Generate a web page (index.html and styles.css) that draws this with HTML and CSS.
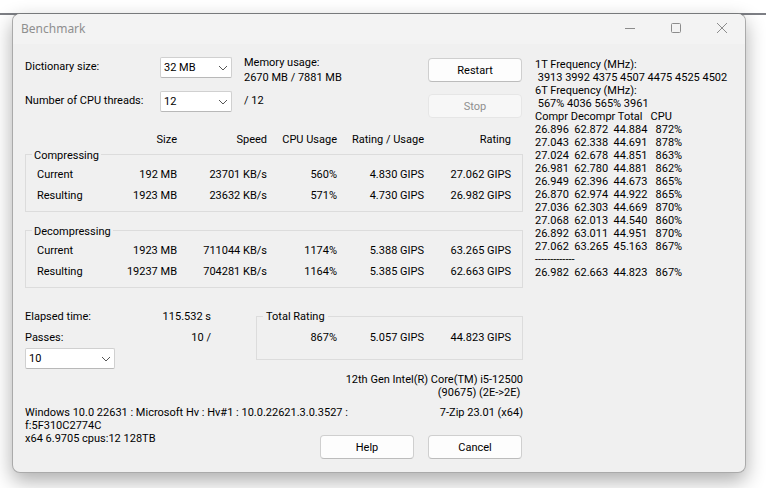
FILE: index.html
```html
<!DOCTYPE html>
<html lang="en">
<head>
<meta charset="utf-8">
<title>Benchmark</title>
<link rel="stylesheet" href="styles.css">
</head>
<body>
<main class="window">
  <header class="titlebar">
    <h1 class="title">Benchmark</h1>
    <div class="window-controls">
      <button type="button" aria-label="Minimize"><svg width="12" height="12" viewBox="0 0 12 12"><path d="M1 5.5h10"/></svg></button>
      <button type="button" aria-label="Maximize"><svg width="12" height="12" viewBox="0 0 12 12"><rect x="1.5" y="0.5" width="9" height="9" rx="1"/></svg></button>
      <button type="button" aria-label="Close"><svg width="12" height="12" viewBox="0 0 12 12"><path d="M1 0l10 10M11 0L1 10"/></svg></button>
    </div>
  </header>
  <div class="content">
    <section class="main">
      <div class="top">
        <div class="settings">
          <label for="dictionary">Dictionary size:</label>
          <span class="select"><select id="dictionary"><option>32 MB</option></select><svg width="10" height="6" viewBox="0 0 10 6"><path d="M1 1l4 4 4-4"/></svg></span>
          <div class="memory">Memory usage:<br>2670 MB / 7881 MB</div>
          <label for="threads">Number of CPU threads:</label>
          <span class="select"><select id="threads"><option>12</option></select><svg width="10" height="6" viewBox="0 0 10 6"><path d="M1 1l4 4 4-4"/></svg></span>
          <div>/ 12</div>
        </div>
        <div class="run">
          <button type="button" class="button">Restart</button>
          <button type="button" class="button" disabled>Stop</button>
        </div>
      </div>
      <table class="ratings">
        <colgroup><col class="c-name"><col class="c-size"><col class="c-speed"><col class="c-usage"><col class="c-ratio"><col class="c-rating"></colgroup>
        <thead>
          <tr><td></td><th scope="col">Size</th><th scope="col">Speed</th><th scope="col">CPU Usage</th><th scope="col">Rating / Usage</th><th scope="col">Rating</th></tr>
        </thead>
        <tbody>
          <tr class="group"><th colspan="6" scope="rowgroup"><span>Compressing</span></th></tr>
          <tr><th scope="row">Current</th><td>192 MB</td><td>23701 KB/s</td><td>560%</td><td>4.830 GIPS</td><td>27.062 GIPS</td></tr>
          <tr><th scope="row">Resulting</th><td>1923 MB</td><td>23632 KB/s</td><td>571%</td><td>4.730 GIPS</td><td>26.982 GIPS</td></tr>
        </tbody>
        <tbody>
          <tr class="group"><th colspan="6" scope="rowgroup"><span>Decompressing</span></th></tr>
          <tr><th scope="row">Current</th><td>1923 MB</td><td>711044 KB/s</td><td>1174%</td><td>5.388 GIPS</td><td>63.265 GIPS</td></tr>
          <tr><th scope="row">Resulting</th><td>19237 MB</td><td>704281 KB/s</td><td>1164%</td><td>5.385 GIPS</td><td>62.663 GIPS</td></tr>
        </tbody>
      </table>
      <div class="summary">
        <div class="progress">
          <div class="pair"><span>Elapsed time:</span><span>115.532 s</span></div>
          <div class="pair"><label for="passes">Passes:</label><span>10 /</span></div>
          <span class="select passes"><select id="passes"><option>10</option></select><svg width="10" height="6" viewBox="0 0 10 6"><path d="M1 1l4 4 4-4"/></svg></span>
        </div>
        <fieldset class="total">
          <legend>Total Rating</legend>
          <div class="total-row"><span>867%</span><span>5.057 GIPS</span><span>44.823 GIPS</span></div>
        </fieldset>
      </div>
      <div class="cpu">12th Gen Intel(R) Core(TM) i5-12500
(90675) (2E-&gt;2E) </div>
      <footer class="footer">
        <div class="system">Windows 10.0 22631 : Microsoft Hv : Hv#1 : 10.0.22621.3.0.3527 :
f:5F310C2774C
x64 6.9705 cpus:12 128TB</div>
        <div class="version">7-Zip 23.01 (x64)</div>
        <div class="actions">
          <button type="button" class="button">Help</button>
          <button type="button" class="button">Cancel</button>
        </div>
      </footer>
    </section>
    <aside class="log">1T Frequency (MHz):
 3913 3992 4375 4507 4475 4525 4502
6T Frequency (MHz):
 567% 4036 565% 3961
Compr Decompr Total   CPU
26.896  62.872  44.884   872%
27.043  62.338  44.691   878%
27.024  62.678  44.851   863%
26.981  62.780  44.881   862%
26.949  62.396  44.673   865%
26.870  62.974  44.922   865%
27.036  62.303  44.669   870%
27.068  62.013  44.540   860%
26.892  63.011  44.951   870%
27.062  63.265  45.163   867%
-------------
26.982  62.663  44.823   867%</aside>
  </div>
</main>
</body>
</html>
```
FILE: styles.css
```css
* { box-sizing: border-box; }

body {
  margin: 0;
  padding: 13px 20px 15px 12px;
  background: linear-gradient(#7d7f85, #7d7f85) 0 13px / 100% 2px no-repeat #fff;
  color: #000;
  font: 11px/13px Roboto, "Liberation Sans", sans-serif;
  overflow: hidden;
}

button, select { font: inherit; color: inherit; }

.window {
  border: 1px solid #aaa;
  border-top-color: #77797b;
  border-radius: 8px;
  background: #f0f0f0;
  box-shadow: 0 8px 20px rgba(0, 0, 0, 0.32);
  overflow: hidden;
}

.titlebar {
  display: flex;
  justify-content: space-between;
  height: 30px;
  padding-left: 8px;
  background: #f3f3f3;
  color: #8f8f8f;
}

.title {
  margin: 0;
  font: 12px/30px "Noto Sans", "Open Sans", sans-serif;
}

.window-controls { display: flex; }

.window-controls button {
  display: grid;
  place-items: center;
  width: 46px;
  padding: 0;
  border: 0;
  background: none;
}

svg { fill: none; stroke: #8c8c8c; stroke-width: 1; }

.content {
  display: grid;
  grid-template-columns: 83fr 33fr;
  gap: 12px;
  padding: 11px 12px 13px;
}

.top {
  display: flex;
  justify-content: space-between;
  padding-right: 1px;
}

.settings {
  display: grid;
  grid-template-columns: 135px 72px auto;
  grid-template-rows: 30px 23px;
  row-gap: 4px;
}

.settings > label, .settings > div { padding-top: 5px; }
.settings > div { padding-left: 12px; }
.settings > .select { align-self: start; margin-top: 2px; }
.settings > .memory { padding-top: 0; line-height: 15px; }

.run {
  display: grid;
  align-content: start;
  gap: 12px;
  padding-top: 3px;
}

.select { position: relative; display: block; }

.select select {
  appearance: none;
  display: block;
  width: 100%;
  height: 21px;
  padding: 0 20px 0 3px;
  border: 1px solid #d0d0d0;
  border-bottom-color: #b8b8b8;
  border-radius: 2px;
  background: #fff;
}

.select svg {
  position: absolute;
  right: 4px;
  top: 8px;
  stroke: #555;
  pointer-events: none;
}

.button {
  width: 94px;
  height: 24px;
  padding: 0;
  border: 1px solid #cfcfcf;
  border-bottom-color: #bcbcbc;
  border-radius: 4px;
  background: #fdfdfd;
}

.button:disabled {
  border-color: #e6e6e6;
  background: #f7f7f7;
  color: #8f8f8f;
}

.ratings {
  width: 100%;
  margin-top: 12px;
  border-spacing: 0;
  table-layout: fixed;
  text-align: right;
  white-space: nowrap;
}

.c-name { width: 72px; }
.c-size { width: 80px; }
.c-speed { width: 90px; }
.c-usage { width: 70px; }
.c-ratio { width: 87px; }
.c-rating { width: 99px; }

.ratings th { font-weight: normal; }
.ratings th, .ratings td { padding: 4px 0; }
.ratings thead th, .ratings thead td { padding: 3px 0 2px; }
.ratings tr > :last-child { padding-right: 12px; }
.ratings tbody { position: relative; }

.ratings tbody::before {
  content: "";
  position: absolute;
  inset: 6px 0 12px;
  border: 1px solid #dcdcdc;
}

.ratings tbody th { position: relative; padding-left: 12px; text-align: left; }
.ratings .group th { padding: 1px 0 2px 7px; }
.ratings .group span { padding: 0 2px; background: #f0f0f0; }
.ratings tbody tr:last-child > * { padding-bottom: 22px; }

.summary {
  display: flex;
  justify-content: space-between;
  padding-top: 10px;
}

.progress { width: 186px; }

.pair {
  display: flex;
  justify-content: space-between;
  height: 21px;
}

.passes { width: 90px; margin-top: -4px; }

.total {
  width: 267px;
  height: 50px;
  margin: 0;
  padding: 8px 11px 0;
  border: 1px solid #dcdcdc;
}

.total legend { margin-left: -5px; padding: 0 3px; }

.total-row {
  display: grid;
  grid-template-columns: 1fr 87px 87px;
  text-align: right;
}

.cpu {
  margin-top: 4px;
  text-align: right;
  white-space: pre;
}

.footer {
  display: grid;
  grid-template-columns: 1fr auto;
  margin-top: 7px;
}

.system { grid-area: 1 / 1 / 3 / 3; white-space: pre; }
.version { grid-area: 1 / 2; text-align: right; }

.actions {
  grid-area: 2 / 2;
  display: flex;
  gap: 14px;
  padding: 16px 1px 0 0;
}

.log { padding-top: 3px; white-space: pre; }
```
